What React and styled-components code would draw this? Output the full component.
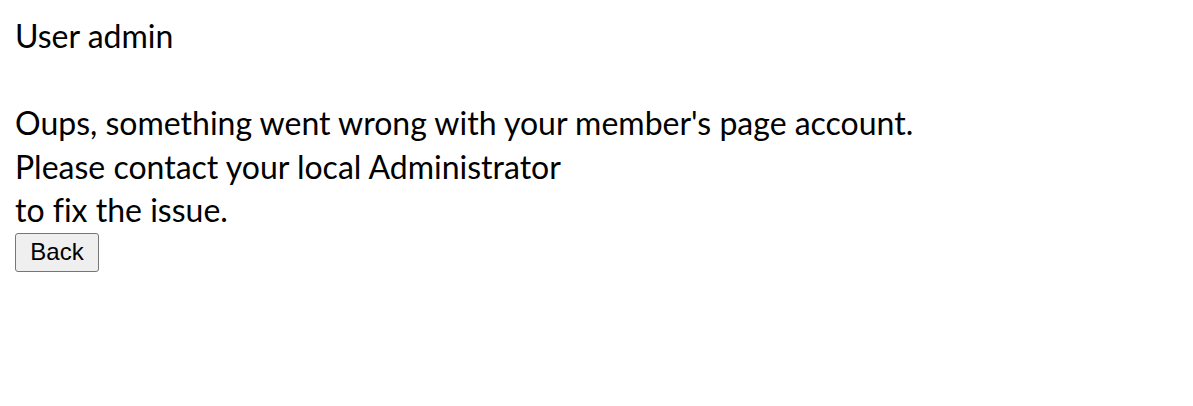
import React from "react";
import styled, { createGlobalStyle } from "styled-components";

const GlobalStyle = createGlobalStyle`
  body {
    margin: 0;
    background: #ffffff;
  }
`;

const Page = styled.div`
  padding: 14px 15px 15px;
  font-family: Lato, "Liberation Sans", sans-serif;
  font-size: 32px;
  line-height: 43.5px;
  font-variant-ligatures: none;
  color: #000;
`;

const Title = styled.div`
  margin-bottom: 43.5px;
`;

const Message = styled.div``;

const BackButton = styled.button`
  display: block;
  box-sizing: border-box;
  width: 84px;
  height: 39px;
  margin-top: 1px;
  padding: 0;
  font-family: "Liberation Sans", Arial, sans-serif;
  font-size: 24px;
  color: #000;
  background: #efefef;
  border: 1px solid #767676;
  border-radius: 3px;
  cursor: pointer;
`;

function App() {
  return (
    <Page>
      <GlobalStyle />
      <Title>User admin</Title>
      <Message>
        Oups, something went wrong with your member's page account.
        <br />
        Please contact your local Administrator
        <br />
        to fix the issue.
      </Message>
      <BackButton>Back</BackButton>
    </Page>
  );
}

export default App;
